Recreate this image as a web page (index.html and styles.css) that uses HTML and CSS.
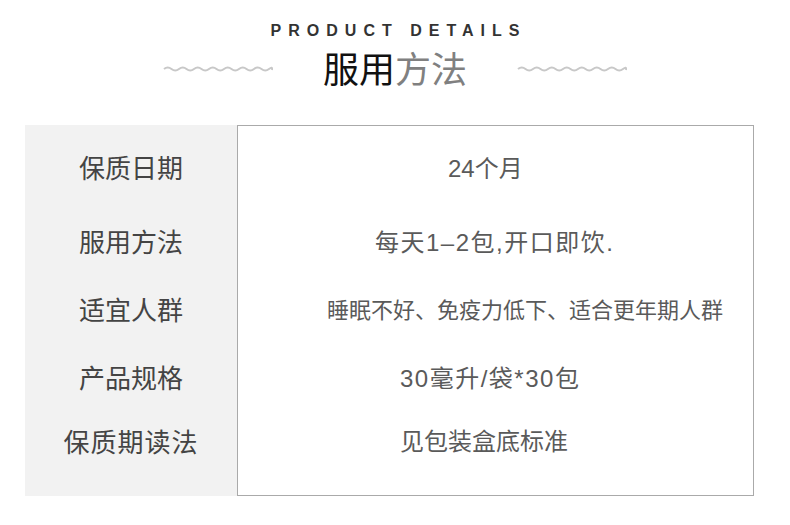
FILE: index.html
```html
<!DOCTYPE html>
<html>

<head>
    <title>服用方法</title>
    <link rel="stylesheet" href="styles.css">
</head>

<body>

    <div class="header">
        <div class="eyebrow">PRODUCT DETAILS</div>
        <div class="title-row">
            <svg class="wave" width="110" height="8" viewBox="0 0 110 8">
                <path d="M1 4 Q4.75 1 8.5 4 T16 4 T23.5 4 T31 4 T38.5 4 T46 4 T53.5 4 T61 4 T68.5 4 T76 4 T83.5 4 T91 4 T98.5 4 T106 4 T109 5" fill="none" stroke="#c8c8c8" stroke-width="2"/>
            </svg>
            <h1 class="title"><span class="dark">服用</span><span class="light">方法</span></h1>
            <svg class="wave" width="110" height="8" viewBox="0 0 110 8">
                <path d="M1 4 Q4.75 1 8.5 4 T16 4 T23.5 4 T31 4 T38.5 4 T46 4 T53.5 4 T61 4 T68.5 4 T76 4 T83.5 4 T91 4 T98.5 4 T106 4 T109 5" fill="none" stroke="#c8c8c8" stroke-width="2"/>
            </svg>
        </div>
    </div>

    <div class="details">
        <div class="label">保质日期</div>
        <div class="value first v-date">24个月</div>

        <div class="label">服用方法</div>
        <div class="value v-usage">每天1–2包,开口即饮.</div>

        <div class="label">适宜人群</div>
        <div class="value v-people">睡眠不好、免疫力低下、适合更年期人群</div>

        <div class="label">产品规格</div>
        <div class="value v-spec">30毫升/袋*30包</div>

        <div class="label last">保质期读法</div>
        <div class="value last v-read">见包装盒底标准</div>
    </div>

</body>

</html>
```

FILE: styles.css
```css
body {
    margin: 0;
    background-color: #fff;
    font-family: "Liberation Sans", "Noto Sans CJK SC", sans-serif;
}

.header {
    padding-top: 22px;
    text-align: center;
}

.eyebrow {
    font-family: "Liberation Sans", Arial, sans-serif;
    font-size: 16px;
    font-weight: bold;
    letter-spacing: 7px;
    color: #333;
    line-height: 18px;
    padding-left: 7px;
}

.title-row {
    display: flex;
    justify-content: center;
    align-items: center;
    gap: 50px;
    margin-top: 2px;
    height: 50px;
}

.wave {
    display: block;
    margin-top: 4px;
}

.title {
    margin: 0;
    font-family: "Noto Sans CJK SC", sans-serif;
    font-size: 36px;
    font-weight: normal;
    line-height: 50px;
}

.title .dark {
    color: #111;
}

.title .light {
    color: #808080;
}

.details {
    display: grid;
    grid-template-columns: 212px 517px;
    grid-template-rows: 82px 66px 70px 66px 87px;
    margin: 33px 0 0 25px;
}

.label {
    background-color: #f2f2f2;
    display: flex;
    align-items: center;
    justify-content: center;
    font-family: "Noto Sans CJK SC", sans-serif;
    font-size: 26px;
    color: #444;
}

.value {
    display: flex;
    align-items: center;
    border-left: 1px solid #aaa;
    border-right: 1px solid #aaa;
    font-size: 24px;
    color: #5a5a5a;
}

.value.first {
    border-top: 1px solid #aaa;
}

.label.last,
.value.last {
    padding-bottom: 25px;
}

.label.last {
    letter-spacing: 1px;
}

.value.last {
    border-bottom: 1px solid #aaa;
}

.v-date {
    padding-left: 210px;
}

.v-usage {
    padding-left: 137px;
    letter-spacing: 1.5px;
}

.v-people {
    padding-left: 89px;
    font-size: 22px;
}

.v-spec {
    padding-left: 162px;
    letter-spacing: 1.5px;
}

.v-read {
    padding-left: 162px;
}
```
